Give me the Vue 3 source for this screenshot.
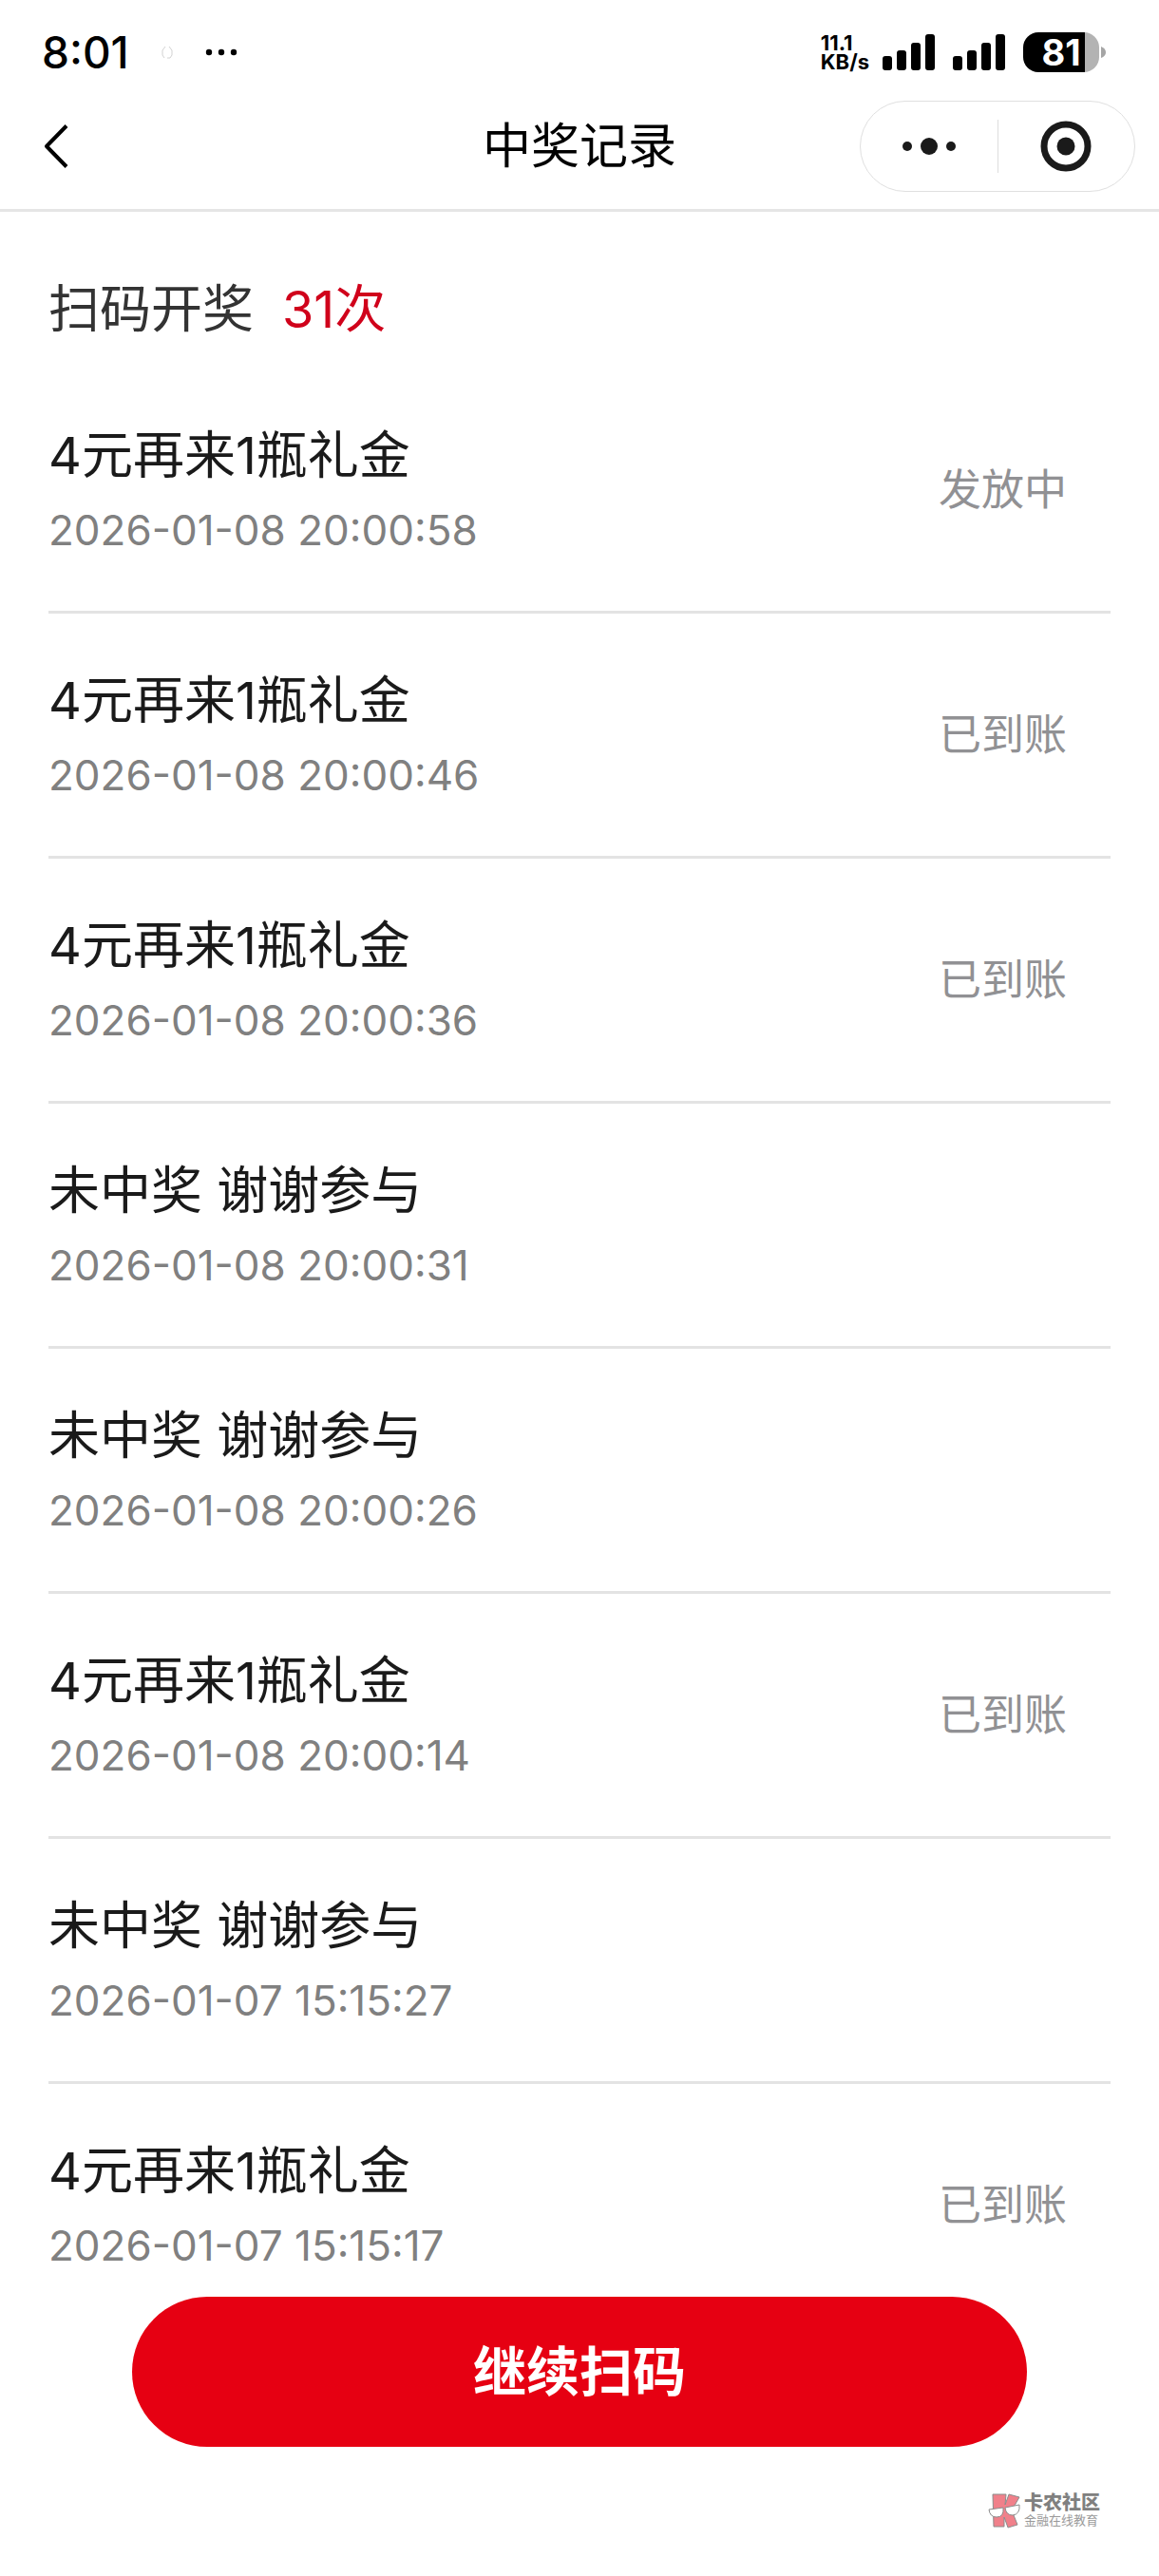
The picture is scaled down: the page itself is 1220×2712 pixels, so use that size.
<template>
  <div class="page">
    <header class="top">
      <div class="status-bar">
        <div class="status-left">
          <span class="clock">8:01</span>
          <svg class="ghost" width="14" height="16" viewBox="0 0 14 16" fill="none" stroke="#d2d2d2" stroke-width="1"><path d="M5 2 L2 6 V11 L4 14 M9 2 L12 6 V11 L10 14 H7"/></svg>
          <svg width="34" height="8" viewBox="0 0 34 8"><circle cx="4" cy="4" r="3.2"/><circle cx="17" cy="4" r="3.2"/><circle cx="30" cy="4" r="3.2"/></svg>
        </div>
        <div class="status-right">
          <div class="speed">11.1<br>KB/s</div>
          <svg v-for="n in 2" :key="n" class="signal" width="56" height="38" viewBox="0 0 56 38">
            <rect x="0" y="23" width="10" height="15" rx="3"/>
            <rect x="15" y="17" width="10" height="21" rx="3"/>
            <rect x="30" y="9" width="10" height="29" rx="3"/>
            <rect x="45" y="0" width="10" height="38" rx="3"/>
          </svg>
          <div class="battery">
            <span class="battery-body">81</span>
            <svg width="5" height="12" viewBox="0 0 5 12"><path d="M0 0 Q5 2 5 6 Q5 10 0 12 Z" fill="#a5a5a5"/></svg>
          </div>
        </div>
      </div>

      <nav class="nav">
        <button class="back" aria-label="返回">
          <svg width="30" height="50" viewBox="0 0 30 50" fill="none" stroke="#000" stroke-width="4"><polyline points="25 3.5 4 25 25 46.5" stroke-linejoin="round"/></svg>
        </button>
        <h1 class="nav-title">中奖记录</h1>
        <div class="capsule">
          <button class="capsule-btn" aria-label="更多">
            <svg width="58" height="20" viewBox="0 0 58 20" fill="#1a1a1a"><circle cx="6" cy="10" r="5"/><circle cx="29" cy="10" r="9"/><circle cx="52" cy="10" r="5"/></svg>
          </button>
          <span class="capsule-line"></span>
          <button class="capsule-btn" aria-label="关闭">
            <svg width="54" height="54" viewBox="0 0 54 54"><circle cx="27" cy="27" r="23" fill="none" stroke="#1a1a1a" stroke-width="7"/><circle cx="27" cy="27" r="9.5" fill="#1a1a1a"/></svg>
          </button>
        </div>
      </nav>
    </header>

    <main class="content">
      <div class="summary">扫码开奖<span class="count">31次</span></div>
      <ul class="list">
        <li v-for="item in records" :key="item.time" class="row">
          <div class="info">
            <div class="name">{{ item.name }}</div>
            <div class="time">{{ item.time }}</div>
          </div>
          <div v-if="item.status" class="status">{{ item.status }}</div>
        </li>
      </ul>
    </main>

    <footer class="footer">
      <button class="scan-btn">继续扫码</button>
      <div class="brand">
        <svg width="34" height="37" viewBox="0 0 34 37">
          <path d="M5 1 H19 L18 12 L22 1 L33 4 L25 18 L31 33 L21 36 L17 25 V35 H6 Z" fill="#f0808a" stroke="#8c8c8c" stroke-width="1"/>
          <g fill="#fff" stroke="#8c8c8c" stroke-width="1">
            <path d="M1 17 L16 15 Q17 25 9 25 Q2 25 1 17 Z"/>
            <path d="M18 15 L33 12 Q34 22 26 23 Q19 23 18 15 Z"/>
          </g>
        </svg>
        <div class="brand-text">
          <span class="brand-name">卡农社区</span>
          <span class="brand-sub">金融在线教育</span>
        </div>
      </div>
    </footer>
  </div>
</template>

<script setup>
import { ref } from 'vue'

const WIN = '4元再来1瓶礼金'
const MISS = '未中奖 谢谢参与'

const records = ref([
  { name: WIN, time: '2026-01-08 20:00:58', status: '发放中' },
  { name: WIN, time: '2026-01-08 20:00:46', status: '已到账' },
  { name: WIN, time: '2026-01-08 20:00:36', status: '已到账' },
  { name: MISS, time: '2026-01-08 20:00:31', status: '' },
  { name: MISS, time: '2026-01-08 20:00:26', status: '' },
  { name: WIN, time: '2026-01-08 20:00:14', status: '已到账' },
  { name: MISS, time: '2026-01-07 15:15:27', status: '' },
  { name: WIN, time: '2026-01-07 15:15:17', status: '已到账' },
])
</script>

<style>
body { background: #fff; }
</style>

<style scoped>
.page {
  min-height: 100vh;
  font-family: Inter, "Noto Sans CJK SC", sans-serif;
  color: #1a1a1a;
}
button {
  border: none; padding: 0; background: none;
  font-family: inherit; cursor: pointer;
}
svg { display: block; flex-shrink: 0; }

/* header */
.top { border-bottom: 3px solid #e5e5e5; }
.status-bar {
  display: flex; justify-content: space-between; align-items: center;
  height: 74px;
  padding: 18px 56px 14px 44px;
  color: #000;
}
.status-left, .status-right, .battery { display: flex; align-items: center; }
.clock { font-size: 46px; font-weight: 500; line-height: 60px; }
.ghost { margin: 0 33px; }
.speed {
  font-size: 22px; font-weight: 700; line-height: 20px;
  margin-right: 14px;
}
.signal { margin-right: 18px; }
.battery { gap: 2px; }
.battery-body {
  width: 80px; height: 42px; border-radius: 16px;
  background: linear-gradient(to right, #000 81%, #b3b3b3 81%);
  color: #fff; text-align: center;
  font-size: 38px; font-weight: 700; line-height: 42px;
}

.nav {
  display: grid; grid-template-columns: 1fr auto 1fr; align-items: center;
  padding: 0 25px 18px;
}
.back { justify-self: start; margin-left: 20px; }
.nav-title { margin: 0; font-size: 51px; font-weight: 400; line-height: 76px; color: #000; }
.capsule {
  display: flex; align-items: center; justify-self: end;
  width: 288px; height: 94px;
  border: 1px solid #e0e0e0; border-radius: 48px;
}
.capsule-btn { flex: 1; height: 100%; display: flex; align-items: center; justify-content: center; }
.capsule-line { width: 1px; height: 56px; background: #dedede; }

/* list */
.content { padding: 0 51px 300px; }
.summary { padding: 63px 0 22px; font-size: 54px; line-height: 80px; color: #333; }
.count { margin-left: 30px; color: #d0021b; }
.list { margin: 0; padding: 0; list-style: none; }
.row {
  display: flex; align-items: center; justify-content: space-between;
  border-bottom: 3px solid #e3e3e3;
}
.info { padding: 52px 0 47px; }
.name { font-size: 54px; line-height: 80px; }
.time { font-size: 44px; line-height: 76px; color: #808080; }
.status { padding-right: 46px; font-size: 45px; line-height: 66px; color: #919194; }

/* bottom action stays above the scrolling list */
.footer {
  position: fixed; left: 0; right: 0; bottom: 0;
  display: flex; flex-direction: column;
  padding: 0 62px 50px;
  background: #fff;
}
.scan-btn {
  height: 158px; margin: 0 77px;
  border-radius: 79px;
  background: #e60012; color: #fff;
  font-size: 56px; font-weight: 700; line-height: 80px;
}
.brand { display: flex; align-items: center; align-self: flex-end; gap: 4px; margin-top: 48px; height: 38px; }
.brand-text { display: flex; flex-direction: column; }
.brand-name { font-size: 20px; font-weight: 900; line-height: 20px; color: #808080; }
.brand-sub { font-size: 13px; line-height: 16px; color: #9a9a9a; }
</style>
